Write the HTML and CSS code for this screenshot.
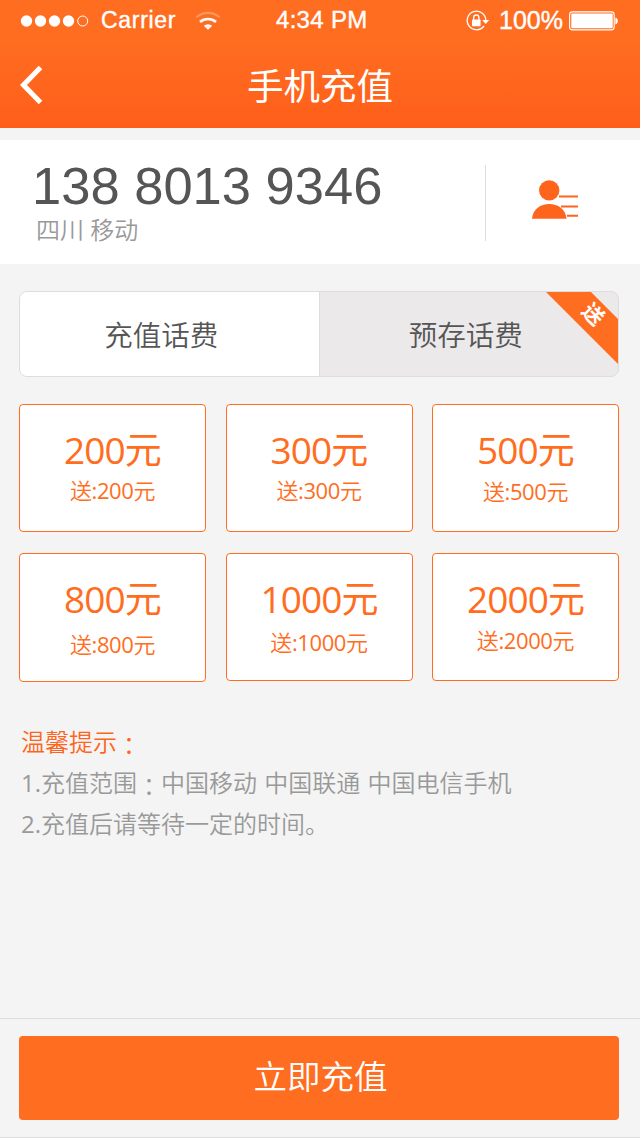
FILE: index.html
```html
<!DOCTYPE html>
<html lang="zh-CN">
<head>
<meta charset="utf-8">
<title>手机充值</title>
<link rel="stylesheet" href="styles.css">
</head>
<body>
<div class="screen">
  <header class="header">
    <div class="status">
      <svg class="signal" width="70" height="14" viewBox="0 0 70 14"><g fill="#fff"><circle cx="6.5" cy="7" r="5.7"/><circle cx="20.5" cy="7" r="5.7"/><circle cx="34.5" cy="7" r="5.7"/><circle cx="48.5" cy="7" r="5.7"/></g><circle cx="62.7" cy="7" r="5" fill="none" stroke="#fff"/></svg>
      <span class="carrier">Carrier</span>
      <svg class="wifi" width="26" height="20" viewBox="0 0 26 20" fill="none" stroke="#fff"><path d="M1.400 6.200a17.500 17.500 0 0 1 23.200 0" stroke-width="2.200" opacity=".3"/><path d="M5 11a12.200 12.200 0 0 1 16 0" stroke-width="2.600"/><path d="M8.800 14.800a6.400 6.400 0 0 1 8.400 0L13 18.800z" fill="#fff" stroke="none"/></svg>
      <span class="clock">4:34 PM</span>
      <svg class="lock" width="24" height="22" viewBox="0 0 24 22"><path d="M18 16A9.300 9.300 0 1 1 19.800 10.500" fill="none" stroke="#fff" stroke-width="1.300"/><path d="M16.200 10h7l-3.500 4z" fill="#fff"/><rect x="6" y="9.500" width="8.600" height="6.800" rx=".8" fill="#fff"/><path d="M7.700 10V7.600a2.600 2.600 0 0 1 5.200 0V10" fill="none" stroke="#fff" stroke-width="1.300"/></svg>
      <span class="percent">100%</span>
      <svg class="battery" width="50" height="20" viewBox="0 0 50 20"><rect x=".6" y=".9" width="44.600" height="18" rx="2.800" fill="none" stroke="#fff" stroke-width="1.100"/><rect x="2.300" y="2.500" width="41.400" height="14.800" rx="1" fill="#fff"/><path d="M46.400 6.500c3.200.6 3.200 6.400 0 7z" fill="#fff"/></svg>
    </div>
    <div class="navbar">
      <svg class="back" width="24" height="40" viewBox="0 0 24 40"><path d="M20.500 2.500 3.500 20l17 17.500" fill="none" stroke="#fff" stroke-width="5"/></svg>
      <h1 class="title">手机充值</h1>
    </div>
  </header>

  <section class="account">
    <div class="account-info">
      <div class="phone">138 8013 9346</div>
      <div class="region">四川 移动</div>
    </div>
    <div class="contacts">
      <svg width="48" height="40" viewBox="0 0 48 40"><g fill="#ff641c"><circle cx="17.200" cy="10.400" r="10.200"/><path d="M0 38.700C1 29 8.500 24 17.200 24S33.600 29 34.500 38.700z"/></g><path d="M27 16.500H46M29 26.400H46M35 35.700H46" stroke="#ff641c" stroke-width="2"/></svg>
    </div>
  </section>

  <nav class="tabs">
    <div class="tab tab-active"><span>充值话费</span></div>
    <div class="tab"><span>预存话费</span>
      <svg class="ribbon" width="72" height="72" viewBox="0 0 72 72"><path d="M0 0H45L72 27V72z" fill="#ff6d21"/></svg>
      <b class="ribbon-text">送</b>
    </div>
  </nav>

  <main class="plans">
    <div class="plan"><div class="amount">200元</div><div class="bonus">送<span class="num">:200</span>元</div></div>
    <div class="plan"><div class="amount">300元</div><div class="bonus">送<span class="num">:300</span>元</div></div>
    <div class="plan"><div class="amount">500元</div><div class="bonus low-1">送<span class="num">:500</span>元</div></div>
    <div class="plan tall"><div class="amount">800元</div><div class="bonus low-5">送<span class="num">:800</span>元</div></div>
    <div class="plan"><div class="amount">1000元</div><div class="bonus low-3">送<span class="num">:1000</span>元</div></div>
    <div class="plan"><div class="amount">2000元</div><div class="bonus low-1">送<span class="num">:2000</span>元</div></div>
  </main>

  <section class="tips">
    <p class="tips-title">温馨提示<span class="colon" lang="zh-TW">：</span></p>
    <p class="tip"><span class="num">1.</span>充值范围<span class="colon" lang="zh-TW">：</span>中国移动 中国联通 中国电信手机</p>
    <p class="tip"><span class="num">2.</span>充值后请等待一定的时间。</p>
  </section>

  <footer class="footer"><button class="submit">立即充值</button></footer>
</div>
</body>
</html>
```

FILE: styles.css
```css
* { box-sizing: border-box; margin: 0; padding: 0; }
body {
  width: 640px;
  background: #f4f4f4;
  font-family: "Open Sans", "Noto Sans CJK SC", sans-serif;
  color: #555;
}
svg { display: block; flex: none; }
.screen { display: flex; flex-direction: column; height: 1138px; overflow: hidden; }
.num { font-weight: 400; }

.header { height: 128px; color: #fff; background: linear-gradient(#ff6d21 0, #ff6d21 42px, #ff5e1a 128px); }
.status { display: flex; align-items: center; height: 41px; padding-left: 20px; font: 23px/41px "Liberation Sans", sans-serif; -webkit-text-stroke: .4px #fff; white-space: nowrap; }
.carrier { width: 84px; margin-left: 11px; letter-spacing: .7px; }
.wifi { margin-left: 10px; }
.clock { width: 100px; height: 43px; margin-left: 55px; font-size: 24px; letter-spacing: .3px; }
.lock { margin-left: 90px; }
.percent { width: 65px; margin-left: 9px; font-size: 25px; }
.battery { margin-left: 5px; }
.navbar { display: grid; grid-template-columns: 100px 1fr 100px; align-items: center; height: 87px; }
.back { margin-left: 20px; }
.title { padding-bottom: 1px; font: 400 36.500px/59px "Noto Sans CJK SC", sans-serif; text-align: center; }

.account { display: flex; align-items: center; height: 124px; margin-top: 12px; background: #fff; }
.account-info { width: 485px; height: 124px; padding: 19px 0 0 32px; }
.phone { font: 52.500px/54px "Liberation Sans", sans-serif; white-space: nowrap; }
.region { margin: 1px 0 0 4px; font-size: 24px; line-height: 32px; font-weight: 350; color: #999; }
.contacts { height: 76px; margin-top: 2px; padding: 15px 0 0 46px; border-left: 1px solid #ddd; }

.tabs { display: flex; width: 600px; height: 86px; margin: 27px 0 0 19px; border: 1px solid #ddd; border-radius: 8px; overflow: hidden; background: #ebe9ea; }
.tab { position: relative; width: 299px; line-height: 86px; font-size: 28.500px; font-weight: 350; text-align: center; }
.tab-active { width: 300px; padding-right: 16px; background: #fff; border-right: 1px solid #ddd; }
.tab:last-child { padding-right: 6px; }
.ribbon { position: absolute; top: 0; right: 0; }
.ribbon-text { position: absolute; top: 10px; right: 14px; color: #fff; font-size: 21px; line-height: 24px; font-weight: 700; transform: rotate(45deg); }

.plans { display: grid; grid-template-columns: 187px 187px 187px; grid-template-rows: 128px 129px; column-gap: 19.500px; row-gap: 21px; margin: 27px 0 0 19px; }
.plan { height: 128px; border: 1px solid #ff6d21; border-radius: 4px; background: #fff; color: #ff6d21; text-align: center; }
.tall { height: 129px; }
.amount { height: 50px; margin-top: 20px; font-size: 37px; line-height: 50px; letter-spacing: -.9px; }
.bonus { height: 30px; font-size: 22px; line-height: 30px; font-weight: 350; letter-spacing: -.4px; }
.low-1 { margin-top: 1px; }
.low-3 { margin-top: 3px; }
.low-5 { margin-top: 5px; }

.tips { margin: 39px 0 0 21px; font-size: 24px; line-height: 41px; font-weight: 350; color: #999; white-space: nowrap; word-spacing: 1px; }
.tips-title { color: #ff641c; }
.colon { display: inline-block; height: 20px; line-height: 20px; vertical-align: -4px; font-family: "Noto Sans CJK TC", sans-serif; }

.footer { height: 120px; margin-top: auto; padding: 17px 0 0 19px; border-top: 1px solid #ddd; border-bottom: 1px solid #ddd; }
.submit { display: block; width: 600px; height: 84px; padding: 0 0 6px 3px; border: 0; border-radius: 4px; background: #ff6d21; color: #fff; font: 350 33.500px/78px "Noto Sans CJK SC", sans-serif; }
```
